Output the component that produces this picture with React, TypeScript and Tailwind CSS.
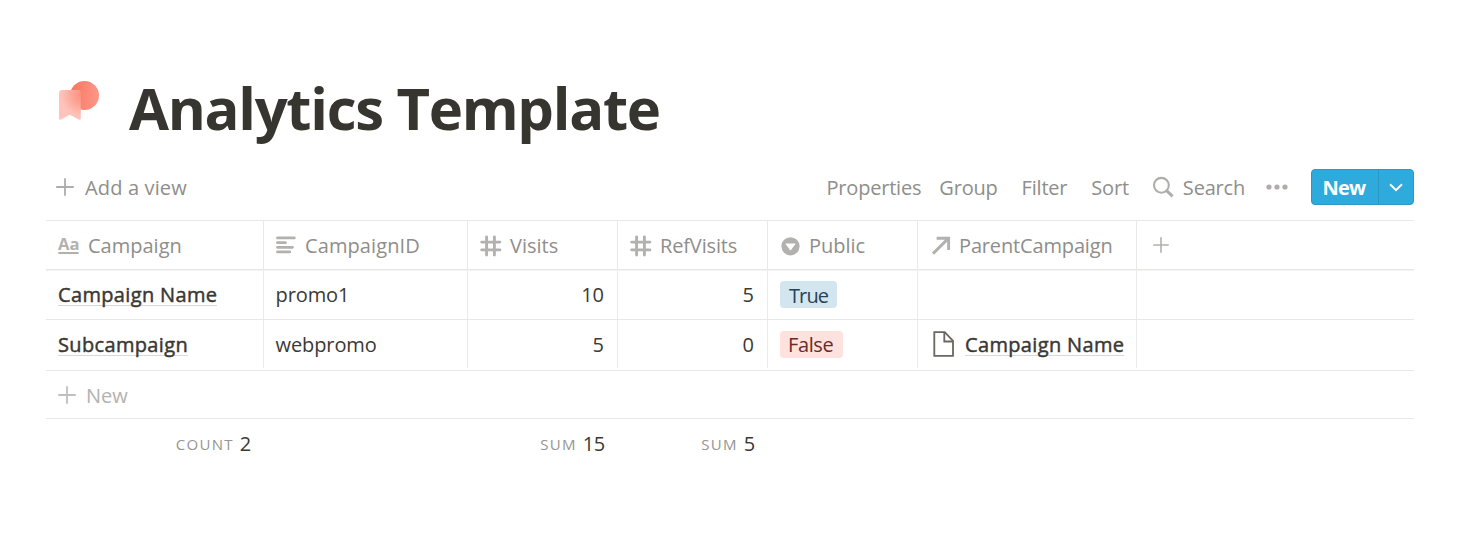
import React from "react";

type IconProps = { className?: string };

const PlusIcon = ({ className }: IconProps) => (
  <svg viewBox="0 0 18 18" className={className} fill="none" stroke="currentColor" strokeWidth="1.8" strokeLinecap="round">
    <path d="M9 .9v16.2M.9 9h16.2" />
  </svg>
);

const TitleIcon = () => (
  <svg viewBox="0 0 22 26" className="h-[26px] w-[22px] shrink-0 overflow-visible" fill="#b2b1ae">
    <text x="0" y="18" fontFamily="Open Sans, sans-serif" fontWeight="700" fontSize="16.5" textLength="21.5" lengthAdjust="spacingAndGlyphs">Aa</text>
    <rect x="0.2" y="20" width="20.6" height="2" rx="0.8" />
  </svg>
);

const TextIcon = () => (
  <svg viewBox="0 0 20 18" className="h-[18px] w-5 shrink-0" stroke="#b2b1ae" strokeWidth="2.8" strokeLinecap="round">
    <path d="M1.5 1.9h16.8M1.5 6.7h8M1.5 11.3h15M1.5 15.9h12.2" />
  </svg>
);

const HashIcon = () => (
  <svg viewBox="0 0 22 22" className="mt-px h-[22px] w-[22px] shrink-0" stroke="#b2b1ae" strokeWidth="2.9" strokeLinecap="round">
    <path d="M6.6 1.9v18.2M14.4 1.9v18.2M1.7 7.1h18.2M1.7 14.9h18.2" />
  </svg>
);

const SelectIcon = () => (
  <svg viewBox="0 0 20 20" className="mt-px h-5 w-5 shrink-0">
    <circle cx="10.5" cy="10.3" r="9.1" fill="#b2b1ae" />
    <path d="M6.1 7.4h8.8c.5 0 .7.4.4.8l-4.3 5.7c-.3.4-.7.4-1 0L5.7 8.2c-.3-.4-.1-.8.4-.8Z" fill="#fff" />
  </svg>
);

const RelationIcon = () => (
  <svg viewBox="0 0 20 20" className="h-5 w-5 shrink-0" fill="none" stroke="#b2b1ae" strokeWidth="2.9">
    <path d="M5.6 3.2h12v11.8M17.4 3.4L2 18.6" />
  </svg>
);

const PageIcon = () => (
  <svg viewBox="0 0 22 26" className="h-[26px] w-[22px] shrink-0" fill="none" stroke="#686762" strokeWidth="1.8">
    <path d="M1.3 1.2h10.4l8.3 8.6v15H1.3Z" />
    <path d="M11.3 1.2v9.3h8.7" />
  </svg>
);

const SearchIcon = () => (
  <svg viewBox="0 0 22 22" className="h-[22px] w-[22px] shrink-0" fill="none" stroke="#aeadaa">
    <circle cx="9.4" cy="9.3" r="7.4" strokeWidth="2.1" />
    <path d="M14.6 14.6l6 5.8" strokeWidth="3" />
  </svg>
);

const Logo = () => (
  <svg viewBox="0 0 42 42" className="h-[42px] w-[42px] shrink-0">
    <defs>
      <linearGradient id="disc" x1="0" y1="0.4" x2="1" y2="0.5">
        <stop offset="0" stopColor="#f8765a" />
        <stop offset="0.6" stopColor="#fc8a78" />
        <stop offset="1" stopColor="#fd9687" />
      </linearGradient>
      <radialGradient id="ribbon" gradientUnits="userSpaceOnUse" cx="25" cy="15" r="24">
        <stop offset="0" stopColor="#fb8f7c" />
        <stop offset="0.45" stopColor="#fda598" />
        <stop offset="0.85" stopColor="#febfb6" />
        <stop offset="1" stopColor="#fec4bb" />
      </radialGradient>
    </defs>
    <circle cx="26.5" cy="15.5" r="14.5" fill="url(#disc)" />
    <path d="M4.2 10H20Q22.8 10 22.8 12.8V38Q22.8 40.6 20.6 39.4L12.8 35.2Q11.8 34.6 10.8 35.2L3 39.4Q1 40.6 1 38V13.2Q1 10 4.2 10Z" fill="url(#ribbon)" />
  </svg>
);

const columns = [
  { label: "Campaign", icon: <TitleIcon />, cell: "w-[218px] pl-3", text: "ml-2" },
  { label: "CampaignID", icon: <TextIcon />, cell: "w-[204px] pl-3", text: "ml-[9px] tracking-[0.1px]" },
  { label: "Visits", icon: <HashIcon />, cell: "w-[150px] pl-3", text: "ml-2" },
  { label: "RefVisits", icon: <HashIcon />, cell: "w-[150px] pl-3", text: "ml-2 tracking-[-0.15px]" },
  { label: "Public", icon: <SelectIcon />, cell: "w-[150px] pl-3", text: "ml-[9px] tracking-[-0.05px]" },
  { label: "ParentCampaign", icon: <RelationIcon />, cell: "w-[219px] pl-[13px]", text: "ml-2 tracking-[-0.15px]" },
];

const rows = [
  { name: "Campaign Name", id: "promo1", visits: 10, ref: 5, pub: true, parent: "", offset: "pb-0", nameOffset: "pb-[2px]" },
  { name: "Subcampaign", id: "webpromo", visits: 5, ref: 0, pub: false, parent: "Campaign Name", offset: "pt-[2px]", nameOffset: "pb-0" },
];

const PageLink = ({ children }: { children: string }) => (
  <span className="h-6 border-b border-[#d9d8d6] leading-[25px] tracking-[0.35px] [-webkit-text-stroke:0.45px_#37352f]">{children}</span>
);

const Total = ({ label, value, className }: { label: string; value: number; className: string }) => (
  <div className={`flex items-center justify-end ${className}`}>
    <span className="text-[15px] tracking-[1.3px] text-[#969591]">{label}</span>
    <span className="ml-1.5 tracking-[-0.3px]">{value}</span>
  </div>
);

export default function App() {
  return (
    <div className="h-[537px] w-[1465px] overflow-hidden bg-white pl-[46px] pr-[51px] pt-[72px] font-['Open_Sans',sans-serif] text-[20px] leading-7 text-[#3b3934]">
      <header className="flex h-[74px] items-center pl-3">
        <div className="-mt-4"><Logo /></div>
        <h1 className="-mt-[3px] ml-[29px] whitespace-nowrap text-[58px] font-bold leading-[74px] tracking-[-1.3px] text-[#37352f]">Analytics Template</h1>
      </header>

      <div className="mt-[23px] flex h-9 items-center text-[#8f8e8a]">
        <div className="flex items-center pl-[11px]">
          <PlusIcon className="-ml-px h-[18px] w-[18px] text-[#aeadaa]" />
          <span className="ml-[11px] pt-[2px] tracking-[0.15px]">Add a view</span>
        </div>
        <div className="ml-auto flex items-center tracking-[-0.2px]">
          <span className="pt-[2px]">Properties</span>
          <span className="ml-[18px] pt-[2px]">Group</span>
          <span className="ml-6 pt-[2px]">Filter</span>
          <span className="ml-6 pt-[2px]">Sort</span>
          <span className="-mt-px ml-[23px]"><SearchIcon /></span>
          <span className="ml-[9px] pt-[2px]">Search</span>
          <svg viewBox="0 0 22 6" className="ml-[21px] mr-px h-1.5 w-[22px]" fill="#aeadaa">
            <circle cx="3" cy="3" r="2.6" /><circle cx="11" cy="3" r="2.6" /><circle cx="19" cy="3" r="2.6" />
          </svg>
          <div className="ml-[22px] flex h-9 w-[103px] overflow-hidden rounded-[4px] border border-[#2b99c6] bg-[#2eaadc] text-white">
            <div className="flex w-[67px] items-center justify-center border-r border-[#2996c3] pr-0.5 pt-[2px] font-bold tracking-[-0.8px]">New</div>
            <div className="flex flex-1 items-center justify-center">
              <svg viewBox="0 0 14 9" className="h-[9px] w-[14px]" fill="none" stroke="white" strokeWidth="2"><path d="M1 1.2l6 6 6-6" /></svg>
            </div>
          </div>
        </div>
      </div>

      <div className="mt-[15px] flex h-[50px] border-y border-[#e8e8e6] text-[#8f8e8a]">
        {columns.map((c) => (
          <div key={c.label} className={`flex items-center border-r border-[#e8e8e6] ${c.cell}`}>
            {c.icon}
            <span className={`pt-[2px] ${c.text}`}>{c.label}</span>
          </div>
        ))}
        <div className="flex items-center pl-4"><PlusIcon className="h-4 w-4 text-[#b2b1ae]" /></div>
      </div>

      {rows.map((r, i) => (
        <div key={r.name} className={i === 0 ? "border-b border-t border-b-[#e8e8e6] border-t-[#f3f3f2]" : "border-b border-[#e8e8e6] pb-[2px]"}>
          <div className="flex h-12">
            <div className={`flex w-[218px] items-center border-r border-[#ecebea] pl-3 ${r.nameOffset}`}><PageLink>{r.name}</PageLink></div>
            <div className={`flex w-[204px] items-center border-r border-[#ecebea] pl-[11.5px] tracking-[-0.1px] ${r.offset}`}>{r.id}</div>
            <div className={`flex w-[150px] items-center justify-end border-r border-[#ecebea] pr-[13px] ${r.offset}`}>{r.visits}</div>
            <div className={`flex w-[150px] items-center justify-end border-r border-[#ecebea] pr-[13px] ${r.offset}`}>{r.ref}</div>
            <div className={`flex w-[150px] items-center border-r border-[#ecebea] pl-3 ${r.nameOffset}`}>
              {r.pub
                ? <span className="h-[27px] w-[57px] rounded-[4px] bg-[#d3e5ef] pl-[9px] leading-[29px] tracking-[-0.9px] text-[#264257]">True</span>
                : <span className="h-[27px] w-[63px] rounded-[4px] bg-[#ffe2dd] pl-2 leading-[28px] tracking-[-0.4px] text-[#6b2a28]">False</span>}
            </div>
            <div className="flex w-[219px] items-center border-r border-[#ecebea] pl-[15px]">
              {r.parent && <><PageIcon /><span className="ml-2.5 flex"><PageLink>{r.parent}</PageLink></span></>}
            </div>
          </div>
        </div>
      ))}

      <div className="flex h-12 items-center border-b border-[#e8e8e6] pl-3 text-[#b3b2af]">
        <PlusIcon className="h-[18px] w-[18px] text-[#c0bfbc]" />
        <span className="ml-2.5 pt-[2px]">New</span>
      </div>

      <div className="flex h-[50px] items-center">
        <Total label="COUNT" value={2} className="w-[218px] pr-[13px]" />
        <div className="w-[204px]" />
        <Total label="SUM" value={15} className="w-[150px] pr-[13px]" />
        <Total label="SUM" value={5} className="w-[150px] pr-[13px]" />
      </div>
    </div>
  );
}
